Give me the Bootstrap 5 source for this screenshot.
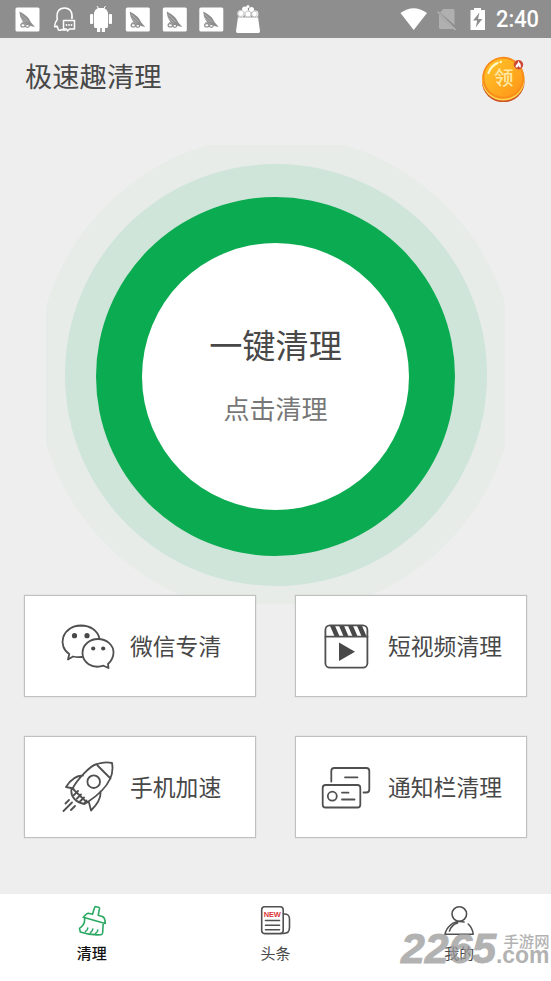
<!DOCTYPE html>
<html lang="zh-CN">
<head>
<meta charset="utf-8">
<meta name="viewport" content="width=device-width, initial-scale=1">
<title>极速趣清理</title>
<link href="https://cdn.jsdelivr.net/npm/bootstrap@5.3.0/dist/css/bootstrap.min.css" rel="stylesheet">
<style>
body{font-family:"Noto Sans CJK SC",sans-serif;background:#eee;color:#484848;height:981px;overflow:hidden}
svg{display:block;flex:none}
.status{height:38px;background:#8e8e8e}
.clock{font:500 24px/39px Roboto,sans-serif;color:#fff;width:43px;white-space:nowrap}
.clock span{display:inline-block;transform:scaleX(.91);transform-origin:left}
.app-head{height:107px;padding:15px 26px 0 25px}
.app-title{font-size:27.3px;line-height:44px;margin:0}
.coin{margin-top:1px}
.halo{width:459px;height:459px}
.ring{border-radius:50%;display:flex;flex:none;align-items:center;justify-content:center}
.r1{width:480px;height:480px;background:#e7ece9}
.r2{width:422px;height:422px;background:#cfe5da}
.r3{width:359px;height:359px;background:#0bab51;margin-top:3px}
.r4{width:267px;height:267px;background:#fff;flex-direction:column}
.big{font-size:33.2px;line-height:48px;margin-top:-6px}
.sub{font-size:26px;line-height:38px;color:#777;margin-top:21px}
.tiles{margin-top:-9px;padding:0 24px;display:grid;grid-template-columns:232px 232px;justify-content:space-between;row-gap:39px;position:relative}
.tile{height:102px;background:#fff;border:1px solid #c0c0c0;box-shadow:0 0 1px #bbb;font-size:22.8px;line-height:34px;color:#484848}
.tabs{height:87px;background:#fff;margin-top:auto;font-size:15px;line-height:22px}
.tab{width:184px;padding-top:10px;gap:6px}
.tab.active{color:#111;font-weight:500}
.ink{fill:none;stroke:#505050;stroke-width:1.8;stroke-linecap:round;stroke-linejoin:round}
.tab .ink{stroke-width:1.6}
.tab .broom{stroke:#2ba862}
.watermark{position:absolute;left:399px;top:924px;width:152px;height:50px;pointer-events:none}
</style>
</head>
<body class="d-flex flex-column position-relative">
<svg width="0" height="0" class="position-absolute"><defs>
<g id="shot"><rect width="24" height="24" rx="1.5" fill="#fff"/><path d="M4 4Q13 8.500 15.500 15L19.500 19.500 15 18.500 8 15Q4 10 4 4" fill="#8e8e8e"/><path d="M5.500 7l8 8M5 10l7 6" stroke="#c4c4c4" stroke-width=".7"/><g fill="none" stroke="#8e8e8e" stroke-width="1.200"><ellipse cx="7.500" cy="17.800" rx="2.200" ry="1.700"/><ellipse cx="12" cy="18.300" rx="1.900" ry="1.500"/><path d="M6 15.500h8"/></g></g>
</defs></svg>

<header class="status d-flex justify-content-between">
<svg width="275" height="38" viewBox="0 0 275 38">
<use href="#shot" x="15.500" y="7.500"/><use href="#shot" x="125.800" y="7.500"/><use href="#shot" x="162.800" y="7.500"/><use href="#shot" x="199.300" y="7.500"/>
<g fill="none" stroke="#fff" stroke-width="1.500" stroke-linejoin="round"><path d="M62 29.500q-4 2-4-.7 0-1-1.200-2.800-1.200 1.500-2.200.4 0-4 2.700-7C56 12 59 8 64.500 8s8.500 4 7.400 11"/><path d="M63.500 20.500h11v8.500h-5l-2 2-1-2h-3z"/><path d="M62 29.500q2 1 4 .3"/></g><g fill="#fff"><circle cx="66.500" cy="25" r=".9"/><circle cx="69" cy="25" r=".9"/><circle cx="71.500" cy="25" r=".9"/></g>
<g fill="#fff"><path d="M94 12.500q1-3.500 4-4.500h6q3 1 4 4.500v14q0 1.500-1.500 1.500H105v4h-3.200v-4h-1.600v4H97v-4h-1.500q-1.500 0-1.500-1.500z"/><rect x="90" y="14" width="3.200" height="10" rx="1"/><rect x="108.800" y="14" width="3.200" height="10" rx="1"/><path d="M97 6l2 3M105.500 6l-2 3" stroke="#fff" stroke-width="1"/><path d="M238 17h20l2 14q0 2-1.500 2h-21q-1.500 0-1.500-2z"/><circle cx="241" cy="13.500" r="3.600"/><circle cx="248" cy="14" r="3.600"/><circle cx="255" cy="14" r="3.400"/><circle cx="245" cy="9.500" r="3"/><circle cx="251.500" cy="9.500" r="2.500"/><circle cx="248" cy="6.500" r="1.500"/></g>
<g fill="none" stroke="#aaa" stroke-width=".6"><circle cx="241" cy="13.500" r="3"/><circle cx="248" cy="14" r="3"/><circle cx="254.500" cy="14" r="2.800"/></g><path d="M237 17.300h22" stroke="#aaa" stroke-width=".7"/>
</svg>
<div class="d-flex pe-2 me-1">
<svg width="97" height="38" viewBox="400 0 97 38"><path d="M401.500 13Q414.500 3.500 428 13L414.700 30z" fill="#fff"/><path d="M444.500 9H454q1.500 0 1.500 1.500V25L441 12.500zM440 14.500L454.500 29H441.500q-1.500 0-1.500-1.500z" fill="#b0b0b0"/><path d="M438.500 11.500l18 18.500" stroke="#b0b0b0" stroke-width="1.700"/><path d="M471.500 10h3.500V8h7v2h4v20h-14.500z" fill="#fff"/><path d="M480.500 12.500l-6.500 8h4.200l-1.500 7 6.500-8.500h-4.200z" fill="#8e8e8e"/></svg>
<div class="clock"><span>2:40</span></div>
</div>
</header>

<div class="app-head d-flex justify-content-between align-items-start">
<h1 class="app-title fw-normal">极速趣清理</h1>
<svg class="coin" width="44" height="48" viewBox="481 54 44 48"><defs><linearGradient id="gold" x1="0" y1="0" x2="1" y2="1"><stop stop-color="#ffc629"/><stop offset="1" stop-color="#ff9418"/></linearGradient></defs>
<ellipse cx="503.300" cy="81.500" rx="21.300" ry="20.800" fill="#cf5425"/><ellipse cx="503.300" cy="79.800" rx="21.300" ry="20.800" fill="#ffd34a"/><circle cx="503.300" cy="77.800" r="21" fill="#f98c1b"/><circle cx="503.300" cy="77.800" r="19" fill="url(#gold)"/><path d="M488.500 73q2.500-7 9-10" fill="none" stroke="#fff8c8" stroke-width="2.200" stroke-linecap="round"/><circle cx="500.700" cy="62" r="1.200" fill="#fff8c8"/><text x="503.700" y="85.300" text-anchor="middle" font-size="19.500" font-weight="500" fill="#ffe9a5">领</text><circle cx="518.500" cy="64.700" r="4.700" fill="#cf4836"/><path d="M518.500 60.500q.5 2 2 3.500l.5 3.500-2-.5-.5-1.500-1 2-2-.2q0-2.300 1.500-3.300 1.500-1.500 1.500-3.500" fill="#fff"/></svg>
</div>

<main>
<div class="halo mx-auto overflow-hidden d-flex align-items-center justify-content-center">
<div class="ring r1"><div class="ring r2"><div class="ring r3"><div class="ring r4">
<div class="big">一键清理</div><div class="sub">点击清理</div>
</div></div></div></div>
</div>

<div class="tiles">
<a class="tile d-flex align-items-center text-decoration-none" href="#">
<svg width="105" height="100" viewBox="25 596 105 100"><g class="ink"><path d="M82 657q-5 .5-9-.5l-5 3 1.300-5.500C57.500 647 61 626 81 625.500c9 0 17 5 18.500 13.500"/><path d="M108 664l.5 4-5-2.300C92 669.500 82.500 662 82.500 653c0-8 7-14 15.500-14s15.500 6 15.500 13.500q0 6.500-5.500 11.500z"/></g><g fill="#484848"><circle cx="74.500" cy="635.700" r="2.600"/><circle cx="87" cy="635.700" r="2.600"/><circle cx="93.200" cy="648.500" r="2.100"/><circle cx="103.200" cy="648.500" r="2.100"/></g></svg>
<span>微信专清</span></a>
<a class="tile d-flex align-items-center text-decoration-none" href="#">
<svg width="92" height="100" viewBox="296 596 92 100"><path d="M330 625.800l4.500 10.500h5l-4.500-10.500zM339 625.800l4.500 10.500h5l-4.500-10.500zM348 625.800l4.500 10.500h5l-4.500-10.500zM357 625.800l4.500 10.500h5l-4.500-10.500z" fill="#484848"/><g class="ink"><rect x="325.400" y="625.400" width="42" height="42.300" rx="4.500"/><path d="M325.500 636.600h42"/></g><path d="M339 642.500v18.500l16-9.300z" fill="#484848"/></svg>
<span>短视频清理</span></a>
<a class="tile d-flex align-items-center text-decoration-none" href="#">
<svg width="105" height="100" viewBox="25 737 105 100"><g class="ink"><path d="M72.500 788.500C77 780 90 765.500 97 764q8-2.500 15-1c1.500 8-.5 13-2 16-4 9-13 17-23 23.500zM97.500 765.500l13 13M83 775.500q-10 0-17 11.500l7.500 1.500M100.500 791.500q1 9-9.500 19l-2-8M71.500 789q-1 6 3 10t10 5l3-2M74 795l4-4M77 798.500l4-4M80 801.500l4-4M84 803.500l2.500-3M69 800l-3.500 3.500M72 802.500l-8.500 8.500M75 806l-4 4"/><circle cx="93.700" cy="781.700" r="6.300"/></g></svg>
<span>手机加速</span></a>
<a class="tile d-flex align-items-center text-decoration-none" href="#">
<svg width="92" height="100" viewBox="296 737 92 100"><g class="ink"><path d="M331.300 781.500V771q0-3 3-3h32q3 0 3 3v18.500q0 3-3 3h-2.800M345 777.300h12.500M342 799.500h12.500M342 792.700h6.500"/><rect x="322.700" y="785" width="37.600" height="22.500" rx="2.800"/><circle cx="332.300" cy="796.200" r="4.500"/></g></svg>
<span>通知栏清理</span></a>
</div>
</main>

<nav class="tabs d-flex">
<div class="tab active d-flex flex-column align-items-center">
<svg width="32" height="32" viewBox="76 904 32 32"><path class="ink broom" d="M92.500 914.200l2-6.500q.3-1.200 1.500-1l2.500.5q1.200.3 1 1.500l-1.300 6.500 3.800 1.200q2 .5 2.500 2.500.8 2 .7 4.600l-21.900-6.200 3.200-3.300q1-.9 3-.5zM84.500 918.300q1 6-5 10l.8 3.700q10 3.500 20.700 2.700 1.500-.3 1.600-1.700l.6-9M85.500 931.500q2-1 2.300-3.500M90.500 932.500q2-1 2.300-3.500M95.500 933.500q2-1 2.300-3.500"/></svg><span>清理</span></div>
<div class="tab d-flex flex-column align-items-center">
<svg width="32" height="32" viewBox="260 904 32 32"><g class="ink"><rect x="261.700" y="906.800" width="21.500" height="26.800" rx="3"/><path d="M283.500 914q6-.5 6 5v8.500q0 6-6 6h-3M265.500 920.500h14M265.500 925.200h14M265.500 929.800h14"/></g><text x="263.700" y="917" textLength="17.200" lengthAdjust="spacing" font-family="Liberation Sans,sans-serif" font-weight="700" font-size="7.500" fill="#dd383b">NEW</text></svg><span>头条</span></div>
<div class="tab d-flex flex-column align-items-center">
<svg width="32" height="32" viewBox="443 904 32 32"><g class="ink"><circle cx="459.300" cy="914" r="7.300"/><path d="M464 922q-8-1.800-13.500 3-4.500 4-5.500 9.300h28.200q-.5-6-5-10.300M449.500 931q2-6.300 8-8"/></g></svg><span>我的</span></div>
</nav>

<svg class="watermark" viewBox="399 924 152 50"><g fill="#999" opacity=".75" font-weight="700" font-family="Liberation Sans,sans-serif"><text x="401" y="963" font-size="43" font-style="italic" textLength="95" lengthAdjust="spacingAndGlyphs" stroke="#999" stroke-width="1">2265</text><text x="496" y="963" font-size="24" textLength="53.500" lengthAdjust="spacingAndGlyphs">.com</text><text x="503.500" y="946.500" font-family="Noto Sans CJK SC,sans-serif" font-size="15.300" font-weight="500" textLength="46">手游网</text></g></svg>
<script src="https://cdn.jsdelivr.net/npm/bootstrap@5.3.0/dist/js/bootstrap.bundle.min.js"></script>
</body>
</html>
